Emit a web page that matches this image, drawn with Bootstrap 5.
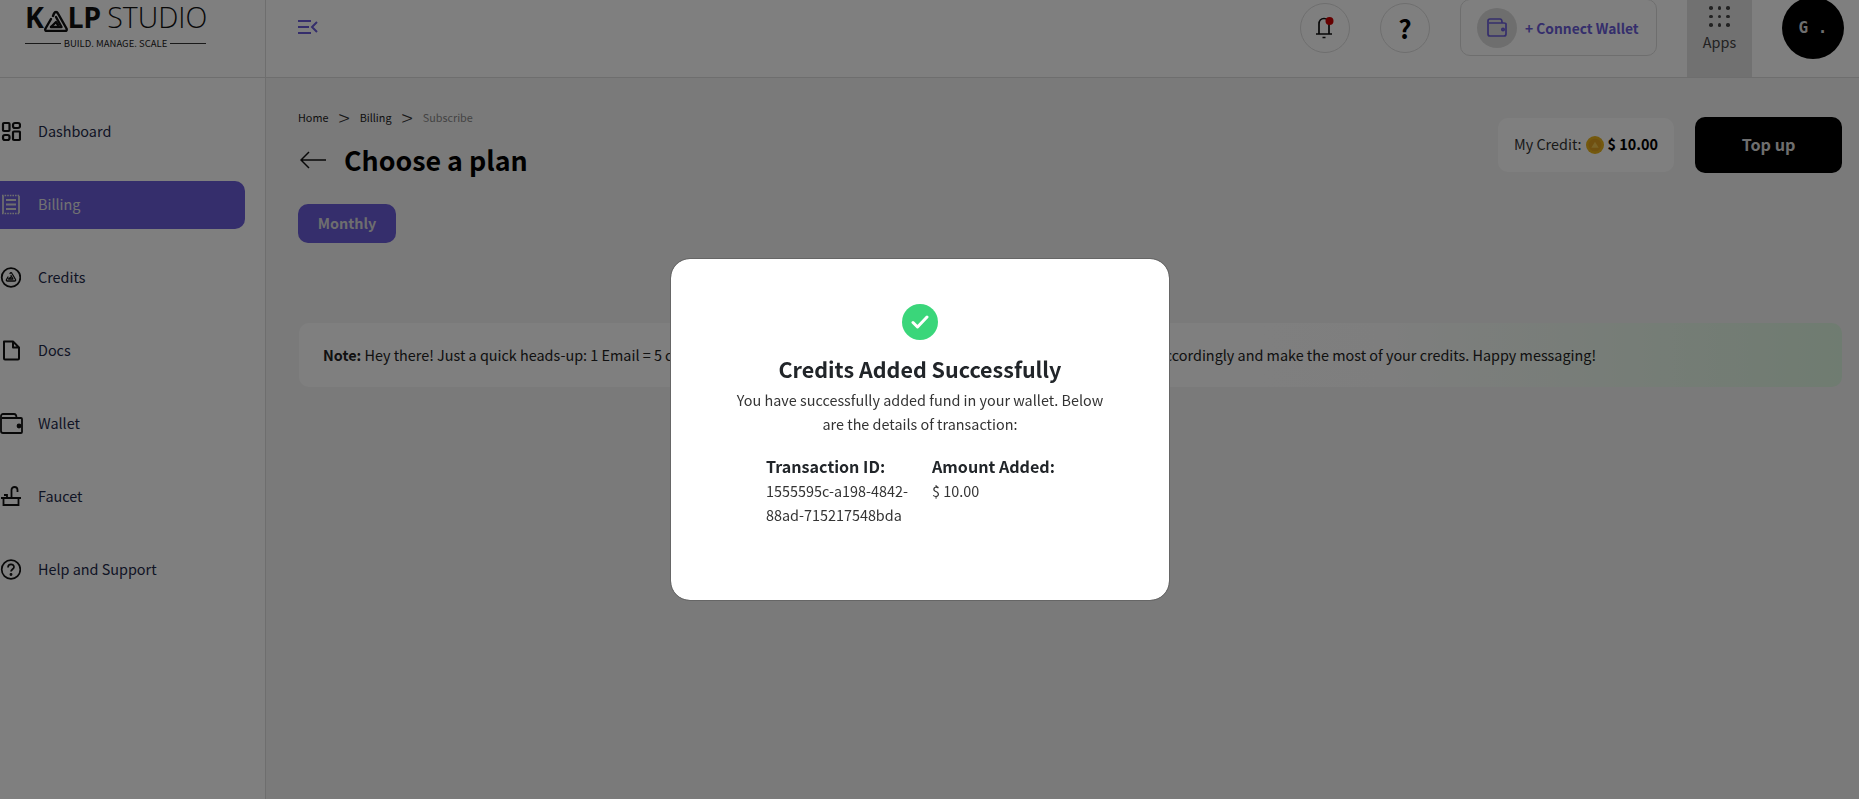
<!DOCTYPE html>
<html lang="en">
<head>
  <meta charset="UTF-8">
  <meta name="viewport" content="width=device-width, initial-scale=1">
  <title>Choose a plan</title>
  <link href="https://cdn.jsdelivr.net/npm/bootstrap@5.3.2/dist/css/bootstrap.min.css" rel="stylesheet">
  <style>
    body {
      font-family: "Noto Sans CJK SC", "Noto Sans", sans-serif;
      font-size: 14.4px;
      line-height: 24px;
      color: #212529;
      background: #f5f5f5;
      height: 100vh;
      overflow: hidden;
    }
    .top-bar { height: 78px; background: #fff; border-bottom: 1px solid #ddd; }
    .logo-cell { width: 266px; height: 77px; border-right: 1px solid #ddd; padding: 2px 0 0 25px; flex-shrink: 0; }
    .logo-main { font-family: "Open Sans", sans-serif; font-size: 28.500px; line-height: 30px; color: #111; white-space: nowrap; height: 33px; }
    .logo-main b { font-weight: 700; letter-spacing: -0.4px; }
    .logo-main span { font-weight: 300; margin-left: -1px; }
    .logo-tag { width: 181px; font-size: 9.5px; line-height: 14px; color: #222; gap: 3px; margin-top: 1px; white-space: nowrap; }
    .logo-tag i { flex: 1; height: 1px; background: #333; }
    .menu-btn { margin: 19px 0 0 32px; color: #6a5cd8; }
    .round-btn { width: 50px; height: 50px; border-radius: 50%; border: 1px solid #ddd; margin-top: 3px; }
    .help-btn { margin-left: 30px; font-size: 26px; font-weight: 700; color: #000; }
    .wallet-box { width: 197px; height: 57px; margin: -1px 0 0 30px; border: 1px solid #ddd; border-radius: 10px; padding-left: 16px; gap: 8px; color: #6a5cd8; font-weight: 700; font-size: 13.800px; white-space: nowrap; }
    .wallet-disc { width: 40px; height: 40px; border-radius: 50%; background: #ddd; }
    .apps-cell { width: 65px; height: 77px; background: #e3e3e3; margin-left: 30px; padding-top: 6px; color: #444; }
    .dots-grid { display: grid; grid-template-columns: repeat(3, 3.500px); gap: 5px 5px; margin-bottom: 3px; }
    .dots-grid i { width: 3.500px; height: 3.500px; border-radius: 50%; background: #444; }
    .avatar-disc { width: 62px; height: 62px; border-radius: 50%; background: #000; color: #ddd; margin: -3px 15px 0 30px; font-family: "DejaVu Sans Mono", monospace; font-weight: 700; font-size: 16px; }
    .side-panel { width: 266px; height: 721px; background: #fff; border-right: 1px solid #ddd; padding-top: 30px; flex-shrink: 0; }
    .side-link { height: 48px; margin: 0 20px 25px -10px; padding: 0 0 2px 10px; gap: 17px; color: #1e2a4a; border-radius: 10px; text-decoration: none; }
    .side-link.active { background: #6a5cd8; color: #e5e5e5; }
    .side-link svg { flex-shrink: 0; }
    .main-area { padding: 27px 17px 0 32px; }
    .crumbs { font-size: 10.800px; line-height: 24px; height: 24px; color: #222; gap: 10px; }
    .crumbs .sep { font-size: 21px; color: #333; font-weight: 300; }
    .crumbs .muted-crumb { color: #888; }
    .page-title { font-size: 26.800px; line-height: 40px; font-weight: 700; margin: 0; color: #000; }
    .back-arrow { margin: 0 18px 0 2px; }
    .title-row { margin-top: 11px; }
    .credit-row { margin-top: 12px; }
    .credit-box { width: 176px; height: 54px; background: #fff; border-radius: 10px; gap: 4px; color: #333; padding-bottom: 2px; }
    .credit-box b { color: #000; }
    .coin-icon { margin-top: 2px; }
    .topup-btn { width: 147px; height: 56px; background: #000; color: #ddd; border-radius: 10px; font-weight: 700; font-size: 16.200px; margin-left: 21px; border: 0; padding: 0 0 3px; }
    .plan-btn { width: 98px; height: 39px; margin-top: 24px; background: #6a5cd8; color: #ddd; font-weight: 700; font-size: 14.400px; border-radius: 10px; border: 0; padding: 0 0 1px; }
    .note-box { height: 64px; margin: 80px 0 0 1px; padding: 0 24px; border-radius: 10px; white-space: nowrap; overflow: hidden; color: #222; background: linear-gradient(90deg, #fff 0%, #fff 55%, #fdfdfd 70%, #dff8e2 100%); }
    .note-tail { margin-left: 3.500px; }
    .modal-pad { padding-right: 19px; }
    .done-dialog { max-width: 500px; margin: 258px auto 0; }
    .done-card { height: 343px; border-radius: 20px; border: 1px solid #666; padding-top: 45px; }
    .done-check { width: 36px; height: 36px; border-radius: 50%; background: #3ad67a; }
    .done-title { font-size: 21.500px; line-height: 32px; font-weight: 700; margin: 13px 0 0; color: #212529; }
    .done-text { width: 380px; margin: 3px 0 0; color: #333; }
    .done-cols { margin: 17px 0 0 95px; width: 330px; }
    .done-cols h6 { font-size: 16.100px; line-height: 26px; font-weight: 700; margin: 0; }
    .done-cols p { margin: 0; color: #333; }
    .col-id { width: 166px; }
  </style>
</head>
<body>

<header class="top-bar d-flex">
  <div class="logo-cell">
    <div class="logo-main"><b>K<svg width="24" height="22" viewBox="0 0 24 22" fill="none" stroke="#111" stroke-width="2.400" stroke-linejoin="round" stroke-linecap="round" style="margin:0 0 -2px"><path d="M9 6l1-2.500c1-2 3-2 4 0l8.500 15c.6 1.500 0 2.500-1.500 2.500H3c-1.500 0-2.200-1-1.500-2.500L7 9"/><path d="M12 7l5.500 10H7"/><path d="M7 17l5-5 2 3"/></svg>LP</b> <span>STUDIO</span></div>
    <div class="logo-tag d-flex align-items-center"><i></i>BUILD. MANAGE. SCALE<i></i></div>
  </div>
  <div class="flex-grow-1 d-flex align-items-start">
    <svg class="menu-btn" width="20" height="16" viewBox="0 0 20 16" fill="none" stroke="currentColor" stroke-width="2"><path d="M0 2h13M0 8h11M0 14h13M19 3l-5 5 5 5"/></svg>
    <div class="ms-auto d-flex align-items-start">
      <div class="round-btn d-flex align-items-center justify-content-center">
        <svg width="20" height="24" viewBox="0 0 20 24" fill="none" stroke="#111" stroke-width="1.700"><path d="M1 18h16M4 18V8c0-3 2-5.500 5-5.500s5 2.500 5 5.500v10M7.500 21.500h3"/><circle cx="14.500" cy="5" r="4" fill="#c00" stroke="none"/></svg>
      </div>
      <div class="round-btn help-btn d-flex align-items-center justify-content-center">?</div>
      <div class="wallet-box d-flex align-items-center">
        <span class="wallet-disc d-flex align-items-center justify-content-center">
          <svg width="20" height="19" viewBox="0 0 20 19" fill="none" stroke="currentColor" stroke-width="1.700"><path d="M1 5V3c0-1 1-2 2-2h10c1 0 2 1 2 3v1M1 4v12c0 1 1 2 2 2h14c1 0 2-1 2-2V6c0-1-1-1-2-1H2"/><circle cx="16" cy="11.500" r="1.200"/></svg>
        </span>
        + Connect Wallet
      </div>
      <div class="apps-cell d-flex flex-column align-items-center">
        <div class="dots-grid"><i></i><i></i><i></i><i></i><i></i><i></i><i></i><i></i><i></i></div>
        Apps
      </div>
      <div class="avatar-disc d-flex align-items-center justify-content-center">G .</div>
    </div>
  </div>
</header>

<div class="d-flex">
  <nav class="side-panel d-flex flex-column">
    <a href="#" class="side-link d-flex align-items-center">
      <svg width="21" height="21" viewBox="0 0 21 21" fill="none" stroke="#111" stroke-width="2.200"><rect x="3" y="2" width="6.500" height="8" rx="1"/><rect x="13" y="2" width="7" height="5" rx="2"/><rect x="3" y="14" width="6.500" height="5" rx="2"/><rect x="13" y="10.500" width="7" height="8.500" rx="1"/></svg>
      Dashboard
    </a>
    <a href="#" class="side-link active d-flex align-items-center">
      <svg width="21" height="21" viewBox="0 0 21 21" fill="none" stroke="#ddd" stroke-width="1.700"><path d="M3 2v17M19 2v17"/><path d="M2 1.500h18M2 19.500h18" stroke-dasharray="1.600 1"/><path d="M6 6h10M6 10.500h10M6 15h10" stroke-width="2"/></svg>
      Billing
    </a>
    <a href="#" class="side-link d-flex align-items-center">
      <svg width="21" height="21" viewBox="0 0 21 21" fill="none" stroke="#111" stroke-width="1.300" stroke-linejoin="round" stroke-linecap="round"><circle cx="11" cy="10.500" r="9.300" stroke-width="1.800"/><path d="M10 6.500c.5-1 1.500-1 2 0l3.500 6c.4 1 0 1.500-1 1.500H7.500c-1 0-1.400-.5-1-1.500l1.500-2.500"/><path d="M11 8.500l2 3.500H8.500l2.500-2"/></svg>
      Credits
    </a>
    <a href="#" class="side-link d-flex align-items-center">
      <svg width="21" height="21" viewBox="0 0 21 21" fill="none" stroke="#111" stroke-width="2" stroke-linejoin="round"><path d="M4 1.500h9l6 6v11a1 1 0 0 1-1 1H5a1 1 0 0 1-1-1zM13 1.500v6h6"/></svg>
      Docs
    </a>
    <a href="#" class="side-link d-flex align-items-center">
      <svg width="23" height="21" viewBox="0 0 23 21" fill="none" stroke="#111" stroke-width="1.800" style="margin-right:-2px"><path d="M1 6V3c0-1 1-2 2-2h11c1.500 0 2.500 1.500 2.500 4M1 5v13c0 1 .5 2 2 2h18c.5 0 1-.5 1-1V6c0-1-.5-1-1-1H2"/><circle cx="19" cy="13" r="1.500" fill="#111"/></svg>
      Wallet
    </a>
    <a href="#" class="side-link d-flex align-items-center">
      <svg width="21" height="21" viewBox="0 0 21 21" fill="none" stroke="#111" stroke-width="1.800"><path d="M1 12h20M3.500 12v7h15v-7M7 12V9H4M11.500 12V4c0-2 1.500-3 3-3s3 1 3 3v2"/></svg>
      Faucet
    </a>
    <a href="#" class="side-link d-flex align-items-center">
      <svg width="21" height="21" viewBox="0 0 21 21" fill="none" stroke="#111" stroke-width="1.700"><circle cx="11" cy="10.500" r="9.300"/><path d="M8 8.500c0-4 6-4 6-.5 0 2-3 2.500-3 4.500"/><circle cx="11" cy="15.500" r=".6" fill="#111"/></svg>
      Help and Support
    </a>
  </nav>

  <main class="main-area flex-grow-1">
    <div class="d-flex align-items-start justify-content-between">
      <div>
        <div class="crumbs d-flex align-items-center">
          <span>Home</span><span class="sep">&gt;</span><span>Billing</span><span class="sep">&gt;</span><span class="muted-crumb">Subscribe</span>
        </div>
        <div class="title-row d-flex align-items-center">
          <svg class="back-arrow" width="26" height="18" viewBox="0 0 26 18" fill="none" stroke="#111" stroke-width="1.500"><path d="M26 9H1M9 1 1 9l8 8"/></svg>
          <h1 class="page-title">Choose a plan</h1>
        </div>
      </div>
      <div class="credit-row d-flex align-items-center">
        <div class="credit-box d-flex align-items-center justify-content-center">
          My Credit:
          <svg class="coin-icon" width="18" height="18" viewBox="0 0 17 17"><circle cx="8.500" cy="8.500" r="8.500" fill="#e8b21c"/><circle cx="8.500" cy="8.500" r="6" fill="#e0a020"/><path d="M5 11 8.500 5.500 12 11z" fill="#f2c64e"/></svg>
          <b>$ 10.00</b>
        </div>
        <button class="topup-btn">Top up</button>
      </div>
    </div>
    <button class="plan-btn d-block">Monthly</button>
    <div class="note-box d-flex align-items-center">
      <span><b>Note:</b> Hey there! Just a quick heads-up: 1 Email = 5 credits, 1 SMS = 10 credits, 1 WhatsApp = 20 credits. Plan your campaigns <span class="note-tail">accordingly and make the most of your credits. Happy messaging!</span></span>
    </div>
  </main>
</div>

<div class="modal-backdrop show"></div>
<div class="modal d-block modal-pad">
  <div class="modal-dialog done-dialog">
    <div class="modal-content done-card align-items-center text-center">
      <div class="done-check d-flex align-items-center justify-content-center">
        <svg width="18" height="14" viewBox="0 0 18 14" fill="none" stroke="#fff" stroke-width="3" stroke-linecap="round" stroke-linejoin="round"><path d="M2 7.500 6.500 12 16 2"/></svg>
      </div>
      <h4 class="done-title">Credits Added Successfully</h4>
      <p class="done-text">You have successfully added fund in your wallet. Below are the details of transaction:</p>
      <div class="done-cols d-flex align-self-start text-start">
        <div class="col-id">
          <h6>Transaction ID:</h6>
          <p>1555595c-a198-4842-88ad-715217548bda</p>
        </div>
        <div>
          <h6>Amount Added:</h6>
          <p>$ 10.00</p>
        </div>
      </div>
    </div>
  </div>
</div>

<script src="https://cdn.jsdelivr.net/npm/bootstrap@5.3.2/dist/js/bootstrap.bundle.min.js"></script>
</body>
</html>
